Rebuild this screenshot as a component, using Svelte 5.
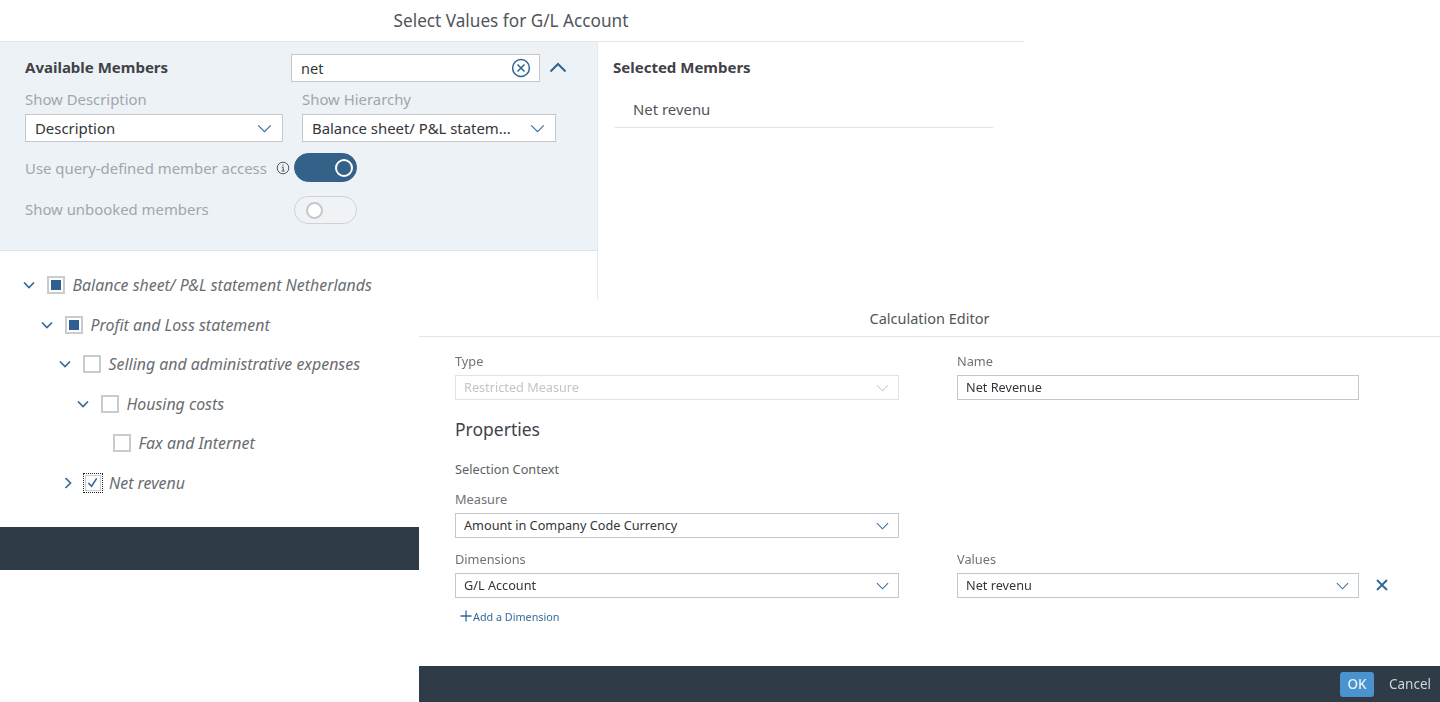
<script lang="ts">
  interface TreeRow {
    label: string;
    level: number;
    arrow: "down" | "side" | "none";
    state: "partial" | "empty" | "checked";
  }

  const treeRows: TreeRow[] = [
    { label: "Balance sheet/ P&L statement Netherlands", level: 0, arrow: "down", state: "partial" },
    { label: "Profit and Loss statement", level: 1, arrow: "down", state: "partial" },
    { label: "Selling and administrative expenses", level: 2, arrow: "down", state: "empty" },
    { label: "Housing costs", level: 3, arrow: "down", state: "empty" },
    { label: "Fax and Internet", level: 4, arrow: "none", state: "empty" },
    { label: "Net revenu", level: 2, arrow: "side", state: "checked" },
  ];
</script>

{#snippet chevron()}
  <svg class="chevron" viewBox="0 0 16 10" aria-hidden="true">
    <path d="M1 1.5 8 8.5 15 1.5" />
  </svg>
{/snippet}

<div class="desk">
  <section class="window members">
    <header class="title big">Select Values for G/L Account</header>
    <div class="columns">
      <div class="left">
        <div class="filters">
          <div class="head-row">
            <h2>Available Members</h2>
            <div class="search">
              <span>net</span>
              <svg viewBox="0 0 20 20" aria-hidden="true">
                <circle cx="10" cy="10" r="8.4" />
                <path d="M6.5 6.5 13.5 13.5M13.5 6.5 6.5 13.5" />
              </svg>
            </div>
            <svg class="up" viewBox="0 0 18 11" aria-hidden="true"><path d="M1.5 9.5 9 2 16.5 9.5" /></svg>
          </div>
          <div class="select-row">
            <div class="field first">
              <span class="muted">Show Description</span>
              <div class="select"><span>Description</span>{@render chevron()}</div>
            </div>
            <div class="field second">
              <span class="muted">Show Hierarchy</span>
              <div class="select"><span>Balance sheet/ P&amp;L statem...</span>{@render chevron()}</div>
            </div>
          </div>
          <div class="toggle-row one">
            <span class="muted">Use query-defined member access</span>
            <svg class="info" viewBox="0 0 14 14" aria-hidden="true">
              <circle cx="7" cy="7" r="5.8" />
              <path d="M5.8 6.2H7.2V10M5.6 10H8.6M7 3.4V4.8" />
            </svg>
            <div class="toggle on"><span></span></div>
          </div>
          <div class="toggle-row two">
            <span class="muted">Show unbooked members</span>
            <div class="toggle"><span></span></div>
          </div>
        </div>
        <ul class="tree">
          {#each treeRows as row}
            <li class="level-{row.level}">
              {#if row.arrow === "down"}
                <svg class="arrow" viewBox="0 0 12 8" aria-hidden="true"><path d="M1 1.5 6 6.5 11 1.5" /></svg>
              {:else if row.arrow === "side"}
                <svg class="arrow side" viewBox="0 0 8 12" aria-hidden="true"><path d="M1.5 1 6.5 6 1.5 11" /></svg>
              {/if}
              <span class="box {row.state}">
                {#if row.state === "checked"}
                  <svg viewBox="0 0 14 14" aria-hidden="true"><path d="M2.5 7.5 6 11 11.5 2.5" /></svg>
                {/if}
              </span>
              <em>{row.label}</em>
            </li>
          {/each}
        </ul>
      </div>
      <div class="right">
        <h2>Selected Members</h2>
        <div class="picked">Net revenu</div>
      </div>
    </div>
    <footer class="bar tall"></footer>
  </section>

  <section class="window editor">
    <header class="title small">Calculation Editor</header>
    <div class="form">
      <div class="form-row">
        <div class="cell">
          <span class="label">Type</span>
          <div class="select thin disabled"><span>Restricted Measure</span>{@render chevron()}</div>
        </div>
        <div class="cell">
          <span class="label">Name</span>
          <div class="select thin"><span>Net Revenue</span></div>
        </div>
      </div>
      <h3>Properties</h3>
      <p class="context">Selection Context</p>
      <div class="cell measure">
        <span class="label">Measure</span>
        <div class="select thin"><span>Amount in Company Code Currency</span>{@render chevron()}</div>
      </div>
      <div class="form-row dim-row">
        <div class="cell">
          <span class="label">Dimensions</span>
          <div class="select thin"><span>G/L Account</span>{@render chevron()}</div>
        </div>
        <div class="cell">
          <span class="label">Values</span>
          <div class="select thin"><span>Net revenu</span>{@render chevron()}</div>
        </div>
        <svg class="remove" viewBox="0 0 12 12" aria-hidden="true"><path d="M1 1 11 11M11 1 1 11" /></svg>
      </div>
      <div class="add">
        <svg viewBox="0 0 12 12" aria-hidden="true"><path d="M6 .5V11.5M.5 6H11.5" /></svg>
        <span>Add a Dimension</span>
      </div>
    </div>
    <footer class="bar short">
      <button class="ok">OK</button>
      <button class="cancel">Cancel</button>
    </footer>
  </section>
</div>

<style>
  :global(body) {
    margin: 0;
    background: #fff;
  }

  .desk {
    position: relative;
    width: 1440px;
    height: 702px;
    overflow: hidden;
    font-family: "Noto Sans", "Liberation Sans", sans-serif;
    color: #32363a;
    filter: blur(0.4px);
  }

  /* the two overlapping dialogs sit on a free canvas */
  .window {
    position: absolute;
    display: flex;
    flex-direction: column;
    background: #fff;
  }

  .members {
    left: 0;
    top: 0;
    width: 1024px;
    height: 570px;
  }

  .editor {
    left: 419px;
    top: 300px;
    width: 1021px;
    height: 402px;
  }

  .title {
    text-align: center;
    border-bottom: 1px solid #e5e5e5;
    color: #515559;
    flex: none;
  }

  .title.big {
    height: 41px;
    line-height: 41px;
    font-size: 17.2px;
    padding-right: 2px;
  }

  .title.small {
    height: 36px;
    line-height: 36px;
    font-size: 14.5px;
  }

  .columns {
    display: flex;
    flex: 1;
    min-height: 0;
  }

  .left {
    width: 597px;
    border-right: 1px solid #e5e8ec;
    flex: none;
  }

  .filters {
    height: 208px;
    background: #edf2f7;
    border-bottom: 1px solid #dbe3eb;
  }

  .head-row {
    display: flex;
    align-items: center;
    padding: 12px 0 0 25px;
    height: 28px;
  }

  h2 {
    margin: 0;
    font-size: 15px;
    font-weight: 700;
    color: #3f4347;
  }

  .head-row h2 {
    width: 266px;
    margin-bottom: 2px;
  }

  .search {
    width: 249px;
    height: 28px;
    box-sizing: border-box;
    border: 1px solid #c4c8cc;
    background: #fff;
    display: flex;
    align-items: center;
    justify-content: space-between;
    padding: 0 8px 0 9px;
    font-size: 14.5px;
  }

  .search svg {
    width: 20px;
    height: 20px;
    fill: none;
    stroke: #2f6497;
    stroke-width: 1.5;
  }

  .up {
    width: 18px;
    height: 11px;
    margin: 0 0 2px 9px;
    fill: none;
    stroke: #2d6593;
    stroke-width: 2;
  }

  .select-row {
    display: flex;
    padding: 7px 0 0 25px;
    gap: 19px;
  }

  .field {
    display: flex;
    flex-direction: column;
    gap: 5px;
  }

  .first {
    width: 258px;
  }

  .second {
    width: 254px;
  }

  .muted {
    font-size: 14.9px;
    line-height: 20px;
    color: #a3a6a9;
    white-space: nowrap;
  }

  .select {
    height: 28px;
    box-sizing: border-box;
    border: 1px solid #c4c8cc;
    background: #fff;
    display: flex;
    align-items: center;
    justify-content: space-between;
    padding: 0 10px 0 9px;
    font-size: 14.9px;
    color: #32363a;
    white-space: nowrap;
  }

  .chevron {
    width: 15px;
    height: 9px;
    fill: none;
    stroke: #3a6f9e;
    stroke-width: 1.3;
    flex: none;
  }

  .toggle-row {
    display: flex;
    align-items: center;
    padding-left: 25px;
  }

  .toggle-row.one {
    margin-top: 11px;
    height: 29px;
  }

  .toggle-row.two {
    margin-top: 14px;
    height: 28px;
  }

  .toggle-row .muted {
    width: 269px;
    flex: none;
  }

  .toggle-row.two .muted {
    margin-bottom: 2px;
  }

  .toggle-row.one .muted {
    width: 250px;
  }

  .info {
    width: 14px;
    height: 14px;
    margin-left: 1px;
    margin-right: 4px;
    fill: none;
    stroke: #55595d;
    stroke-width: 1;
  }

  .toggle {
    width: 63px;
    height: 28px;
    box-sizing: border-box;
    border: 1px solid #cfd3d7;
    border-radius: 15px;
    background: #f0f3f6;
    display: flex;
    align-items: center;
    padding: 0 11px;
  }

  .toggle span {
    width: 13px;
    height: 13px;
    border: 2px solid #c4c7ca;
    border-radius: 50%;
    background: #fff;
    display: block;
  }

  .toggle.on {
    height: 29px;
    background: #346187;
    border-color: #346187;
    justify-content: flex-end;
    padding: 0 3px;
  }

  .toggle.on span {
    border-color: #fff;
    background: #346187;
    width: 14px;
    height: 14px;
  }

  .tree {
    list-style: none;
    margin: 0;
    padding: 14.5px 0 0;
  }

  .tree li {
    height: 39.5px;
    display: flex;
    align-items: center;
    font-size: 15.9px;
    color: #6a6d70;
  }

  .tree em {
    margin-left: 7.5px;
  }

  .level-0 {
    padding-left: 23px;
  }

  .level-1 {
    padding-left: 41px;
  }

  .level-2 {
    padding-left: 59px;
  }

  .level-3 {
    padding-left: 77px;
  }

  .tree li.level-4 {
    padding-left: 113px;
  }

  .arrow {
    width: 12px;
    height: 8px;
    fill: none;
    stroke: #356a98;
    stroke-width: 1.7;
    margin-right: 12px;
    flex: none;
  }

  .arrow.side {
    width: 8px;
    height: 12px;
    margin-left: 4.5px;
    margin-right: 11px;
  }

  .box {
    width: 18px;
    height: 18px;
    box-sizing: border-box;
    border: 2px solid #c9cbcd;
    background: #fff;
    display: flex;
    align-items: center;
    justify-content: center;
    flex: none;
  }

  .box.partial::after {
    content: "";
    width: 10px;
    height: 10px;
    background: #2f6091;
  }

  .box.checked {
    width: 20px;
    height: 20px;
    border: 1px dotted #222;
    box-shadow: inset 0 0 0 1px #fff, inset 0 0 0 2px #c9cbcd;
    margin-right: -1px;
  }

  .box.checked svg {
    width: 13px;
    height: 13px;
    fill: none;
    stroke: #2f6497;
    stroke-width: 1.7;
  }

  .right {
    flex: 1;
    padding: 15px 0 0 15px;
    height: 258px;
    box-sizing: border-box;
  }

  .right h2 {
    line-height: 20px;
  }

  .picked {
    width: 378px;
    box-sizing: border-box;
    margin: 20px 0 0 2px;
    padding-left: 18px;
    height: 31px;
    line-height: 24px;
    border-bottom: 1px solid #e0e3e6;
    font-size: 14.9px;
    color: #515559;
  }

  .bar {
    background: #2f3c48;
    flex: none;
  }

  .bar.tall {
    height: 43px;
    position: absolute;
    left: 0;
    right: 0;
    top: 527px;
  }

  .bar.short {
    height: 36px;
    margin-top: auto;
    display: flex;
    align-items: center;
    justify-content: flex-end;
    padding-right: 9px;
  }

  .form {
    padding: 16px 0 0 36px;
    font-size: 13px;
  }

  .form-row {
    display: flex;
    gap: 58px;
    position: relative;
  }

  .cell {
    width: 444px;
    display: flex;
    flex-direction: column;
    gap: 4px;
  }

  .form-row .cell + .cell {
    width: 402px;
  }

  .label {
    font-size: 12.75px;
    line-height: 16px;
    padding-bottom: 2px;
    color: #6f7276;
  }

  .thin {
    height: 25px;
    font-size: 12.7px;
    padding: 0 9px 2px 8px;
  }

  .thin .chevron {
    width: 13px;
    height: 8px;
    margin-top: 2px;
  }

  .disabled {
    color: #c3c5c7;
    border-color: #e1e3e5;
  }

  .disabled .chevron {
    stroke: #c9d2da;
  }

  h3 {
    margin: 17px 0 0;
    font-size: 17.5px;
    line-height: 24px;
    font-weight: 400;
    color: #3f4347;
  }

  .context {
    margin: 20px 0 0;
    line-height: 16px;
    font-size: 12.75px;
    color: #5b5f63;
  }

  .measure {
    margin-top: 14px;
  }

  .dim-row {
    margin-top: 13px;
  }

  .remove {
    position: absolute;
    left: 921px;
    top: 28px;
    width: 12px;
    height: 12px;
    fill: none;
    stroke: #2f6497;
    stroke-width: 1.8;
  }

  .add {
    display: flex;
    align-items: center;
    gap: 1px;
    margin: 9px 0 0 5px;
    height: 18px;
    font-size: 10.8px;
    color: #346a9b;
  }

  .add svg {
    width: 12px;
    height: 12px;
    fill: none;
    stroke: #346a9b;
    stroke-width: 1.3;
  }

  button {
    font: inherit;
    border: 0;
    background: none;
    padding: 0;
    font-size: 13.5px;
  }

  .ok {
    width: 34px;
    height: 25px;
    border-radius: 3px;
    background: #4a93cf;
    color: #e9f1f8;
    font-weight: 500;
  }

  .cancel {
    margin-left: 15px;
    color: #cfd6dc;
  }
</style>
